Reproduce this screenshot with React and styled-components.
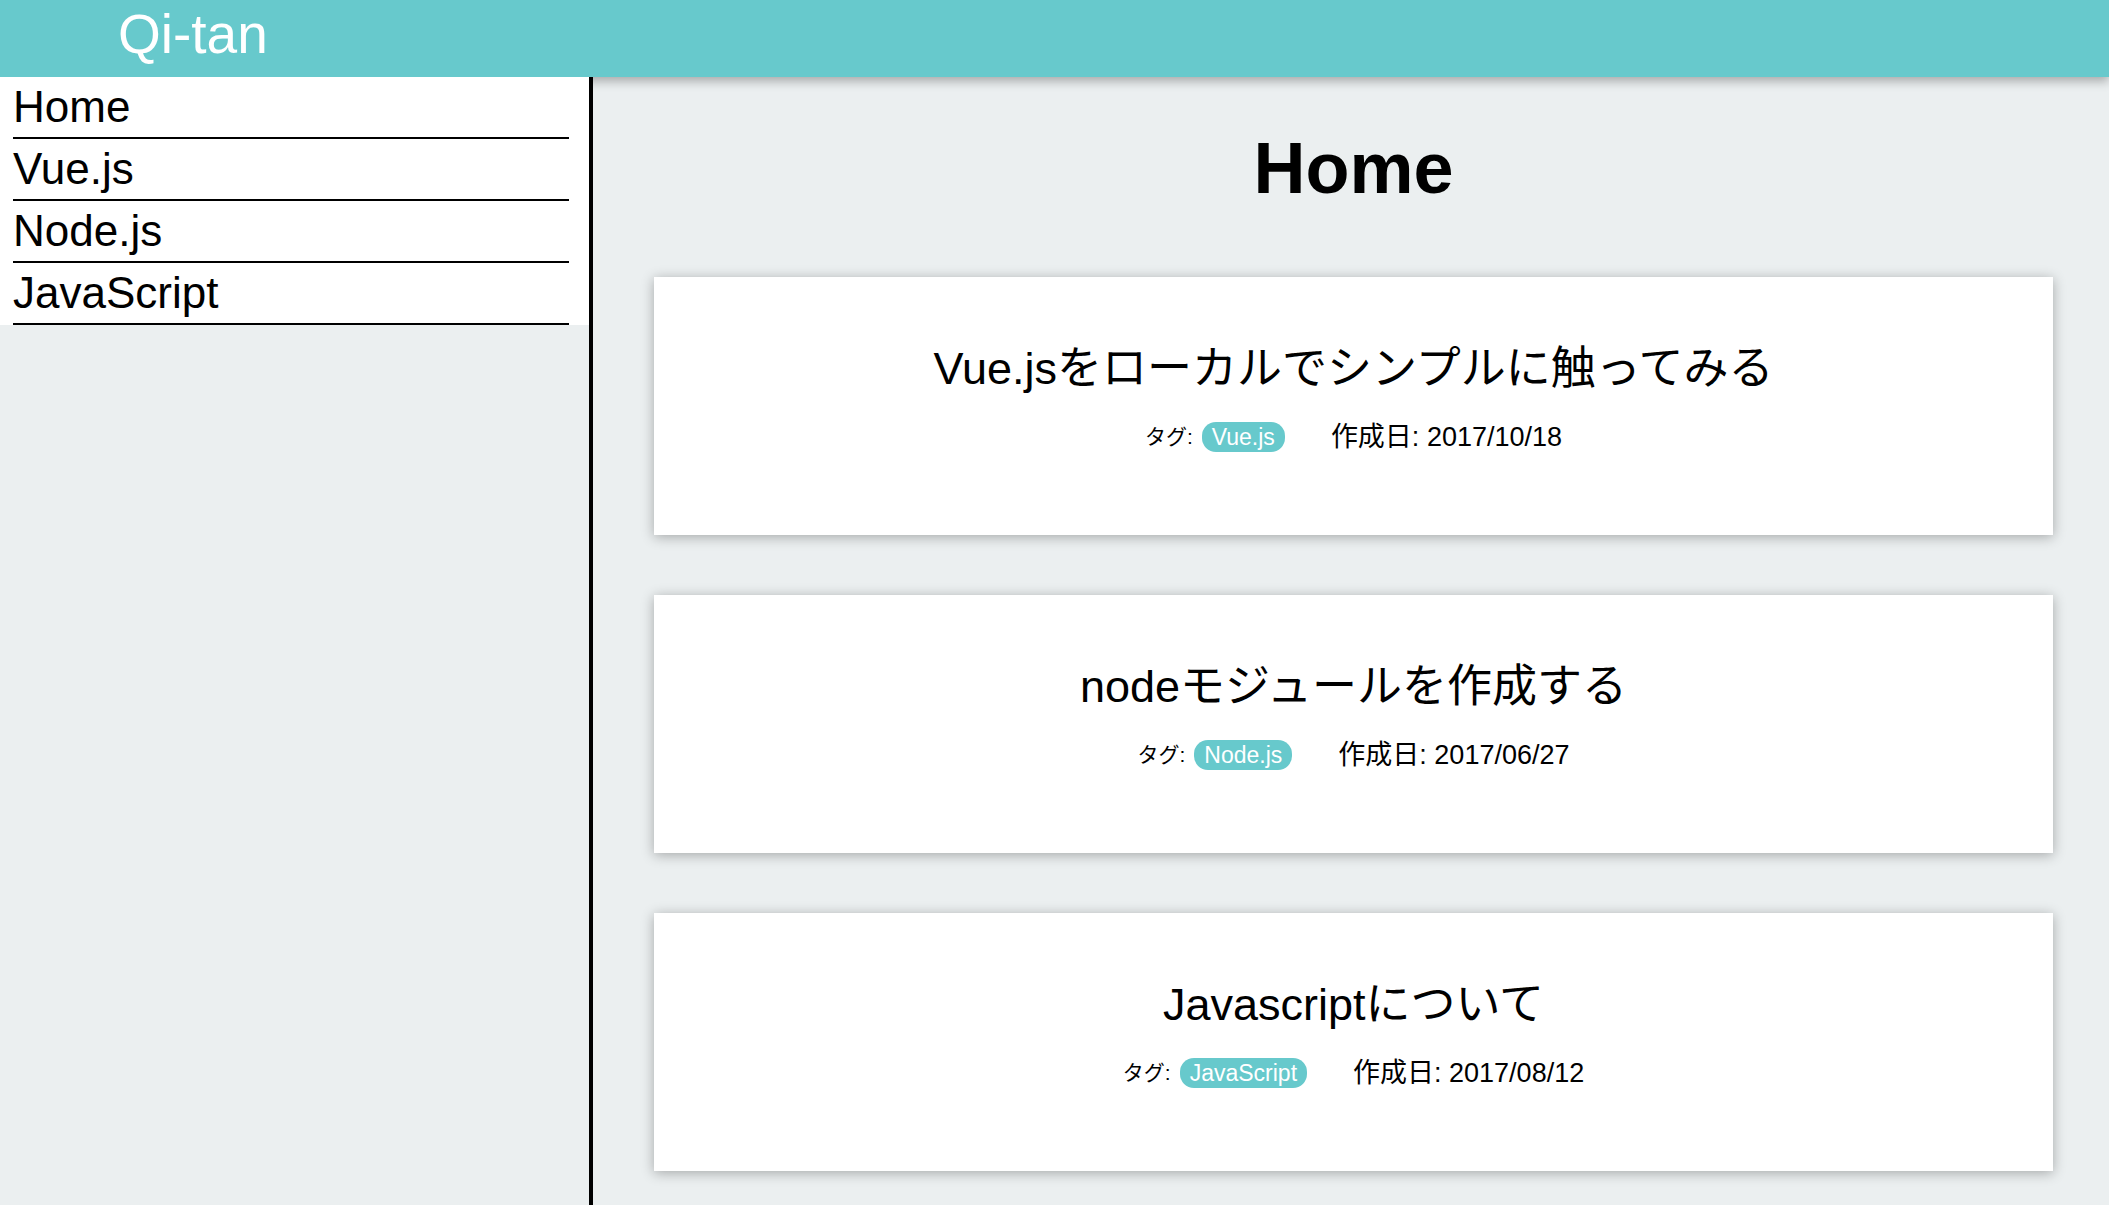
import React from 'react';
import styled, { createGlobalStyle } from 'styled-components';

const GlobalStyle = createGlobalStyle`
    html, body {
        margin: 0;
        padding: 0;
        height: 100%;
        overflow: hidden;
        background: #ebeff0;
        font-family: "Liberation Sans", "Noto Sans CJK JP", sans-serif;
        color: #000;
    }
    #root {
        height: 100%;
    }
`;

const teal = '#67c9cc';

const posts = [
    { title: 'Vue.jsをローカルでシンプルに触ってみる', tag: 'Vue.js', date: '2017/10/18' },
    { title: 'nodeモジュールを作成する', tag: 'Node.js', date: '2017/06/27' },
    { title: 'Javascriptについて', tag: 'JavaScript', date: '2017/08/12' },
];

const menu = ['Home', 'Vue.js', 'Node.js', 'JavaScript'];

const Page = styled.div`
    display: flex;
    flex-direction: column;
    height: 100vh;
`;

const Header = styled.header`
    position: relative;
    z-index: 1;
    flex: 0 0 77px;
    box-sizing: border-box;
    padding: 0 0 0 118px;
    background: ${teal};
    box-shadow: 0 4px 10px rgba(0, 0, 0, 0.3);
`;

const Logo = styled.h1`
    margin: 0;
    font-size: 55px;
    line-height: 69px;
    font-weight: 400;
    color: #fff;
`;

const Body = styled.div`
    flex: 1;
    display: flex;
    min-height: 0;
`;

const Sidebar = styled.nav`
    position: relative;
    z-index: 2;
    flex: 0 0 589px;
    border-right: 4px solid #000;
    background: #ebeff0;
`;

const MenuList = styled.ul`
    list-style: none;
    margin: 0;
    padding: 0 20px 0 13px;
    background: #fff;
`;

const MenuItem = styled.li`
    font-size: 44px;
    line-height: 60px;
    border-bottom: 2px solid #000;
`;

const Main = styled.main`
    flex: 1;
    padding: 0 56px 0 61px;
    overflow: hidden;
`;

const PageTitle = styled.h2`
    margin: 55px 0 73px;
    text-align: center;
    font-size: 72px;
    line-height: 72px;
    font-weight: 700;
`;

const Cards = styled.div`
    display: flex;
    flex-direction: column;
    gap: 60px;
`;

const Card = styled.article`
    box-sizing: border-box;
    height: 258px;
    padding-top: 58px;
    background: #fff;
    box-shadow: 0 2px 12px rgba(0, 0, 0, 0.3);
    text-align: center;
`;

const CardTitle = styled.h3`
    margin: 0;
    font-size: 45px;
    line-height: 68px;
    font-weight: 400;
`;

const Meta = styled.div`
    display: flex;
    justify-content: center;
    align-items: center;
    height: 36px;
    margin-top: 16px;
`;

const TagLabel = styled.span`
    font-size: 21px;
    line-height: 30px;
    margin-right: 9px;
`;

const Tag = styled.span`
    display: inline-block;
    padding: 0 10px;
    height: 30px;
    line-height: 30px;
    border-radius: 14px;
    background: ${teal};
    color: #fff;
    font-size: 23px;
    margin-right: 46px;
`;

const DateText = styled.span`
    font-size: 27px;
    line-height: 30px;
`;

const App = () => (
    <Page>
        <GlobalStyle />
        <Header>
            <Logo>Qi-tan</Logo>
        </Header>
        <Body>
            <Sidebar>
                <MenuList>
                    {menu.map((m) => (
                        <MenuItem key={m}>{m}</MenuItem>
                    ))}
                </MenuList>
            </Sidebar>
            <Main>
                <PageTitle>Home</PageTitle>
                <Cards>
                    {posts.map((p) => (
                        <Card key={p.title}>
                            <CardTitle>{p.title}</CardTitle>
                            <Meta>
                                <TagLabel>タグ:</TagLabel>
                                <Tag>{p.tag}</Tag>
                                <DateText>作成日: {p.date}</DateText>
                            </Meta>
                        </Card>
                    ))}
                </Cards>
            </Main>
        </Body>
    </Page>
);

export default App;
